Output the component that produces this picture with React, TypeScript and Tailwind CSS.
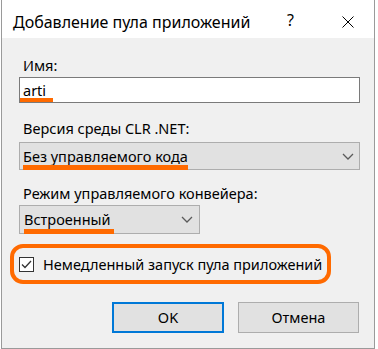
import React from "react";

function Chevron() {
  return (
    <svg width="12" height="7" viewBox="0 0 12 7" className="block">
      <path d="M1 1 L6 6 L11 1" fill="none" stroke="#5a5a5a" strokeWidth="1.3" />
    </svg>
  );
}

export default function App() {
  const font = { fontFamily: '"Noto Sans", "Segoe UI", sans-serif' };
  return (
    <div className="w-[378px] h-[349px] bg-white overflow-hidden" style={font}>
      <div className="ml-[1px] w-[374px] h-[349px] border-x border-b border-[#9a9a9a] bg-[#f0f0f0] flex flex-col">
        <div className="h-[38px] bg-white flex items-center pt-[5px] relative">
          <span className="pl-[11px] text-[16px] text-black leading-none">Добавление пула приложений</span>
          <span className="absolute left-[285px] top-[10px] text-[16px] leading-[20px] text-black">?</span>
          <svg width="12" height="12" viewBox="0 0 12 12" className="absolute left-[340px] top-[16px]">
            <path d="M0.5 0.5 L11.5 11.5 M11.5 0.5 L0.5 11.5" stroke="#000" strokeWidth="1" />
          </svg>
        </div>
        <div className="pl-[17px] pr-[14px] pt-[17px] text-[14.5px] text-[#000]">
          <div className="h-[20px] leading-[20px] pl-[4px]">Имя:</div>
          <div className="relative mt-[2px] h-[26px] bg-white border border-[#7a7a7a] flex items-center pl-[3px]">
            <span className="leading-none">arti</span>
            <div className="absolute left-[0px] top-[20px] w-[33px] h-[4px] bg-[#ff6a00]" />
          </div>
          <div className="h-[20px] leading-[20px] pl-[4px] mt-[15px]">Версия среды CLR .NET:</div>
          <div className="relative mt-[4px] h-[28px] bg-[#e1e1e1] border border-[#adadad] flex items-center pl-[3px] pr-[5px]">
            <span className="leading-none flex-1">Без управляемого кода</span>
            <Chevron />
            <div className="absolute left-[3px] top-[22px] w-[165px] h-[5px] bg-[#ff6a00]" />
          </div>
          <div className="h-[20px] leading-[20px] pl-[4px] mt-[13px]">Режим управляемого конвейера:</div>
          <div className="relative mt-[2px] w-[181px] h-[29px] bg-[#e1e1e1] border border-[#adadad] flex items-center pl-[4px] pr-[6px]">
            <span className="leading-none flex-1">Встроенный</span>
            <Chevron />
            <div className="absolute left-[4px] top-[23px] w-[90px] h-[5px] bg-[#ff6a00]" />
          </div>
          <div className="-ml-[9px] mt-[10px] w-[321px] h-[40px] border-[4px] border-[#ff6a00] rounded-[13px] flex items-center pl-[5px]">
            <div className="w-[15px] h-[15px] border border-[#333] bg-white flex items-center justify-center">
              <svg width="11" height="9" viewBox="0 0 11 9">
                <path d="M1 4.5 L4 7.5 L10 1" fill="none" stroke="#333" strokeWidth="1.3" />
              </svg>
            </div>
            <span className="ml-[9px] leading-none">Немедленный запуск пула приложений</span>
          </div>
          <div className="flex justify-end gap-[14px] mt-[18px] pr-[1px]">
            <button className="w-[112px] h-[31px] bg-[#e1e1e1] border-2 border-[#0078d7] flex items-center justify-center text-[14.5px]">OK</button>
            <button className="w-[121px] h-[31px] bg-[#e1e1e1] border border-[#adadad] flex items-center justify-center text-[14.5px]">Отмена</button>
          </div>
        </div>
      </div>
    </div>
  );
}
